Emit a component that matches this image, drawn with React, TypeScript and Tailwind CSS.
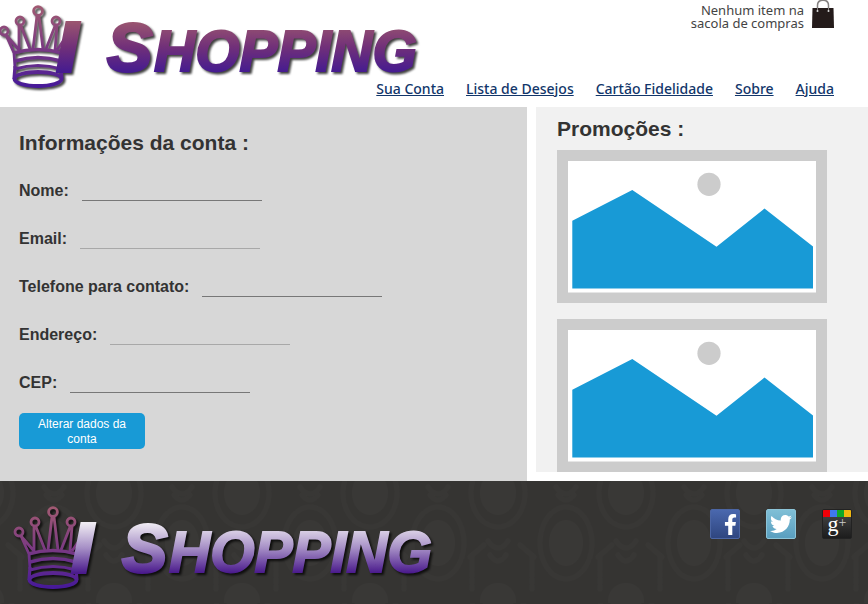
import { useId } from "react";
import { FaFacebookF, FaTwitter } from "react-icons/fa";

type LogoProps = { light?: boolean };

function Logo({ light = false }: LogoProps) {
  const id = useId();
  const crown = `${id}-crown`;
  const tall = `${id}-tall`;
  const top = light ? "#f0ecf3" : "#9a5570";
  const middle = light ? "#a68fc6" : "#713079";
  const bottom = light ? "#4a1a8c" : "#451b90";
  return (
    <svg
      viewBox="0 0 430 100"
      className="h-[100px] w-[430px] overflow-visible drop-shadow-[2px_2px_1px_rgba(0,0,0,0.75)]"
      role="img"
      aria-label="I Shopping"
    >
      <defs>
        <linearGradient id={crown} gradientUnits="userSpaceOnUse" x1="0" y1="6" x2="0" y2="88">
          <stop offset="0" stopColor="#a15a72" />
          <stop offset="0.5" stopColor="#7b3a82" />
          <stop offset="1" stopColor="#45189a" />
        </linearGradient>
        <linearGradient id={tall} gradientUnits="userSpaceOnUse" x1="0" y1="22" x2="0" y2="72">
          <stop offset="0" stopColor={top} />
          <stop offset="0.5" stopColor={middle} />
          <stop offset="1" stopColor={bottom} />
        </linearGradient>
      </defs>
      <g fill="none" stroke={`url(#${crown})`} strokeWidth="2.8" strokeLinejoin="round">
        <circle cx="4" cy="31" r="4" />
        <circle cx="20" cy="21" r="4" />
        <circle cx="38" cy="11" r="4.4" />
        <circle cx="56" cy="21" r="4" />
        <path d="M6 35 L14 53 L15 68 M6 35 L19 50 M19 26 L19 50 M21 26 L30 49 M37 16 L33 49 M39 16 L43 49 M55 26 L46 49 M57 26 L55 50 M68 34 L57 50 M69 35 L62 53 L61 70" />
        <path d="M13 53 Q38 46 62 53 M15 61 Q38 54 61 61" strokeWidth="3.4" />
        <path d="M15 69 Q38 62 61 69 L62 79 M15 66 L14 79" strokeWidth="3.2" />
        <ellipse cx="38" cy="79" rx="23.5" ry="7" strokeWidth="3.8" />
      </g>
      <g
        fill={`url(#${tall})`}
        fontFamily="'Liberation Sans', Arial, sans-serif"
        fontWeight="700"
        fontStyle="italic"
        stroke={`url(#${tall})`}
        strokeWidth="2"
      >
        <text x="58" y="70" fontSize="67" strokeWidth="6">I</text>
        <text x="107" y="71" fontSize="68" strokeWidth="3">
          S<tspan x="154" fontSize="57" strokeWidth="2">HOPPING</tspan>
        </text>
      </g>
    </svg>
  );
}

function BagIcon() {
  return (
    <svg viewBox="0 0 22 28" className="h-7 w-[22px]" aria-hidden="true">
      <path d="M5.5 11V5.5C5.5 2 8 .2 11 .2s5.500 1.800 5.500 5.300V11" fill="none" stroke="#858180" strokeWidth="1.500" />
      <path d="M.5 8h21l.5 20H0z" fill="#241b1a" />
      <path d="M5.500 11V8M16.500 11V8" stroke="#858180" strokeWidth="1" />
      <circle cx="5.500" cy="11" r="1" fill="#ddd" />
      <circle cx="16.500" cy="11" r="1" fill="#ddd" />
    </svg>
  );
}

function Placeholder() {
  return (
    <svg viewBox="0 0 270 153" className="block h-[153px] w-[270px]" role="img" aria-label="Promoção">
      <rect width="270" height="153" fill="#ccc" />
      <rect x="11" y="11" width="248" height="131.500" fill="#fff" />
      <circle cx="152" cy="34.300" r="11.600" fill="#ccc" />
      <path d="M15.300 70.700 75.300 40 159.500 96.700 207.500 58.500 256 96.500V138.500H15.300z" fill="#189ad6" />
    </svg>
  );
}

function Damask() {
  return (
    <svg className="absolute inset-0 h-full w-full" aria-hidden="true">
      <defs>
        <pattern id="damask" width="128" height="122" patternUnits="userSpaceOnUse">
          <g fill="#393836">
            <ellipse cx="114" cy="12" rx="18" ry="22" />
            <ellipse cx="-14" cy="12" rx="18" ry="22" />
            <ellipse cx="54" cy="62" rx="17" ry="23" />
            <ellipse cx="114" cy="120" rx="18" ry="18" />
            <ellipse cx="-14" cy="120" rx="18" ry="18" />
          </g>
          <g fill="none" stroke="#383735" strokeWidth="5" strokeDasharray="5 2 8 3 3 2" strokeLinecap="round">
            <ellipse cx="54" cy="62" rx="26" ry="36" />
            <ellipse cx="114" cy="12" rx="27" ry="34" />
            <ellipse cx="-14" cy="12" rx="27" ry="34" />
            <path d="M44 6q10 14 20 0M46 14q8 10 16 0M104 60q10 14 20 0M106 74q8 12 16 0M20 74v34M88 74v34M8 64l14 12M100 64l-14 12" />
          </g>
        </pattern>
      </defs>
      <rect width="100%" height="100%" fill="url(#damask)" />
    </svg>
  );
}

const links = ["Sua Conta", "Lista de Desejos", "Cartão Fidelidade", "Sobre", "Ajuda"];

const fields = [
  { id: "nome", label: "Nome:", type: "text", line: "border-[#777]" },
  { id: "email", label: "Email:", type: "email", line: "border-[#a8a8a8]" },
  { id: "telefone", label: "Telefone para contato:", type: "tel", line: "border-[#777]" },
  { id: "endereco", label: "Endereço:", type: "text", line: "border-[#a8a8a8]" },
  { id: "cep", label: "CEP:", type: "text", line: "border-[#777]" },
];

export default function App() {
  return (
    <div className="min-h-screen bg-white font-['Liberation_Sans',Arial,sans-serif] text-[#333]">
      <header className="flex h-[107px] justify-between">
        <a href="#inicio" className="-mr-[60px] shrink-0">
          <Logo />
        </a>
        <div className="flex flex-col items-end justify-between pr-[34px] pb-2 font-['Noto_Sans',sans-serif]">
          <div className="flex items-start gap-2">
            <p className="pt-1 text-right text-[13px] leading-[13px] text-[#444]">
              Nenhum item na
              <br />
              sacola de compras
            </p>
            <BagIcon />
          </div>
          <nav className="flex gap-[22px] text-[14px] leading-5 font-medium whitespace-nowrap text-[#12366a]">
            {links.map((link) => (
              <a key={link} href="#" className="underline">
                {link}
              </a>
            ))}
          </nav>
        </div>
      </header>

      <main className="flex items-start gap-[9px]">
        <section className="flex-1 bg-[#d7d7d7] px-[19px] pt-5 pb-8">
          <h1 className="text-[21px] leading-8 font-bold">Informações da conta :</h1>
          <form className="pt-[7px]">
            {fields.map((field) => (
              <div key={field.id} className="flex h-12 items-center gap-[13px]">
                <label htmlFor={field.id} className="pt-[2px] text-[16px] leading-6 font-bold">
                  {field.label}
                </label>
                <input
                  id={field.id}
                  type={field.type}
                  className={`h-[22px] w-[180px] border-b bg-transparent text-[14px] outline-none ${field.line}`}
                />
              </div>
            ))}
            <button
              type="button"
              className="mt-[7px] block w-[126px] rounded-[5px] bg-[#189ad6] px-4 pt-1 pb-[2px] text-[12px] leading-[15px] text-white"
            >
              Alterar dados da conta
            </button>
          </form>
        </section>

        <aside className="w-[332px] bg-[#f1f1f1] pt-2 pl-[21px]">
          <h2 className="text-[21px] leading-7 font-bold">Promoções :</h2>
          <div className="flex flex-col gap-4 pt-[7px]">
            <Placeholder />
            <Placeholder />
          </div>
        </aside>
      </main>

      <footer className="relative h-[123px] bg-[#353432]">
        <Damask />
        <div className="relative flex items-start justify-between pt-5 pr-4 pl-[15px]">
          <a href="#inicio">
            <Logo light />
          </a>
          <div className="flex gap-[26px] pt-2">
            <a
              href="#facebook"
              aria-label="Facebook"
              className="flex size-[30px] items-end justify-end rounded-xs border border-[#4c66a4] bg-linear-to-b from-[#4a68ae] to-[#2f4680] pr-[2px] pb-[3px] text-white"
            >
              <FaFacebookF className="h-[21px] w-[13px]" />
            </a>
            <a
              href="#twitter"
              aria-label="Twitter"
              className="flex size-[30px] items-center justify-center rounded-xs border border-[#8cc4d8] bg-linear-to-b from-[#7fbfd6] to-[#5a9fc0] text-white"
            >
              <FaTwitter size={22} />
            </a>
            <a
              href="#google"
              aria-label="Google+"
              className="flex size-[30px] flex-col overflow-hidden rounded-xs border border-[#222] bg-linear-to-b from-[#4a4a4a] to-[#1c1c1c]"
            >
              <span className="grid h-[7px] shrink-0 grid-cols-4">
                <span className="bg-[#f00008]" />
                <span className="bg-[#3f78f0]" />
                <span className="bg-[#10a828]" />
                <span className="bg-[#f0b810]" />
              </span>
              <span className="flex items-start justify-center font-['Liberation_Serif',serif] text-[22px] leading-[14px] text-white">
                g<span className="text-[14px] leading-[12px] text-[#ccc]">+</span>
              </span>
            </a>
          </div>
        </div>
      </footer>
    </div>
  );
}
